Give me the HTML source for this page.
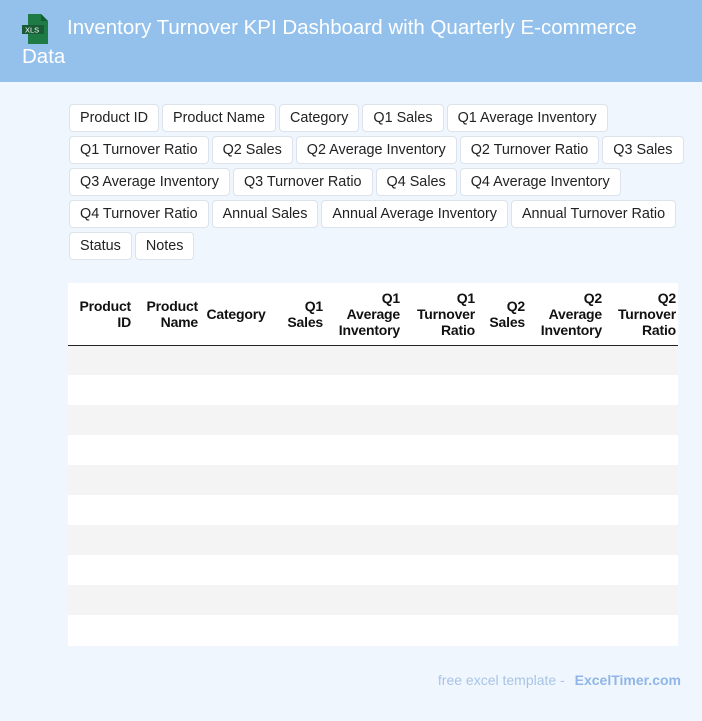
<!DOCTYPE html>
<html><head><meta charset="utf-8"><style>
*{box-sizing:border-box;margin:0;padding:0}
body{width:702px;height:721px;background:#f0f6fe;font-family:"Liberation Sans",Roboto,sans-serif;position:relative;overflow:hidden}
.hd{position:absolute;left:0;top:0;width:702px;height:82px;background:#93c1ec}
.hd h1{position:absolute;left:22px;top:13px;width:680px;font-weight:normal;font-size:20.5px;line-height:29px;color:#fff;text-indent:45px;white-space:nowrap}
.ic{position:absolute;left:22px;top:14px;width:28px;height:30px}
.tags{position:absolute;left:69px;top:104px;width:640px}
.r{display:flex;gap:3px;margin-bottom:4px;white-space:nowrap}
.r span{display:inline-block;height:28px;line-height:26px;padding:0 10px;background:#fff;border:1px solid #dde3ea;border-radius:4px;font-size:14.4px;color:#222}
.tw{position:absolute;left:68px;top:283px;width:610px;height:363px;overflow:hidden;background:#fff}
table{border-collapse:collapse;font-size:14px;table-layout:fixed;width:610px}
th{font-weight:bold;text-align:right;vertical-align:middle;height:62px;line-height:16px;border-bottom:1.5px solid #222;padding:0 2px 0 0;color:#111;letter-spacing:-0.2px}
td{height:30px}
tr.g td{background:#f4f4f4}
.ft{position:absolute;right:21px;top:672px;font-size:14px;color:#a8c4e6}
.ft b{color:#8fb6e6;margin-left:6px}
</style></head><body>
<div class="hd">
<svg class="ic" viewBox="0 0 28 30"><path d="M6 0h13l7 7v23H6z" fill="#1e7b45"/><path d="M19 0v7h7z" fill="#145c32"/><rect x="0" y="11" width="22" height="9" fill="#185c36"/><text x="3" y="18.5" font-size="7.5" fill="#fff" font-family="Liberation Sans">XLS</text></svg>
<h1>Inventory Turnover KPI Dashboard with Quarterly E-commerce<br>Data</h1>
</div>
<div class="tags">
<div class="r"><span>Product ID</span><span>Product Name</span><span>Category</span><span>Q1 Sales</span><span>Q1 Average Inventory</span></div>
<div class="r"><span>Q1 Turnover Ratio</span><span>Q2 Sales</span><span>Q2 Average Inventory</span><span>Q2 Turnover Ratio</span><span>Q3 Sales</span></div>
<div class="r"><span>Q3 Average Inventory</span><span>Q3 Turnover Ratio</span><span>Q4 Sales</span><span>Q4 Average Inventory</span></div>
<div class="r"><span>Q4 Turnover Ratio</span><span>Annual Sales</span><span>Annual Average Inventory</span><span>Annual Turnover Ratio</span></div>
<div class="r"><span>Status</span><span>Notes</span></div>
</div>
<div class="tw"><table>
<col style="width:65px"><col style="width:67px"><col style="width:74px"><col style="width:51px"><col style="width:77px"><col style="width:75px"><col style="width:50px"><col style="width:77px"><col style="width:74px">
<tr><th>Product<br>ID</th><th>Product<br>Name</th><th style="text-align:center">Category</th><th>Q1<br>Sales</th><th>Q1<br>Average<br>Inventory</th><th>Q1<br>Turnover<br>Ratio</th><th>Q2<br>Sales</th><th>Q2<br>Average<br>Inventory</th><th>Q2<br>Turnover<br>Ratio</th></tr>
<tr class="g"><td colspan="9"></td></tr><tr><td colspan="9"></td></tr>
<tr class="g"><td colspan="9"></td></tr><tr><td colspan="9"></td></tr>
<tr class="g"><td colspan="9"></td></tr><tr><td colspan="9"></td></tr>
<tr class="g"><td colspan="9"></td></tr><tr><td colspan="9"></td></tr>
<tr class="g"><td colspan="9"></td></tr><tr><td colspan="9"></td></tr>
</table></div>
<div class="ft">free excel template - <b>ExcelTimer.com</b></div>
</body></html>
